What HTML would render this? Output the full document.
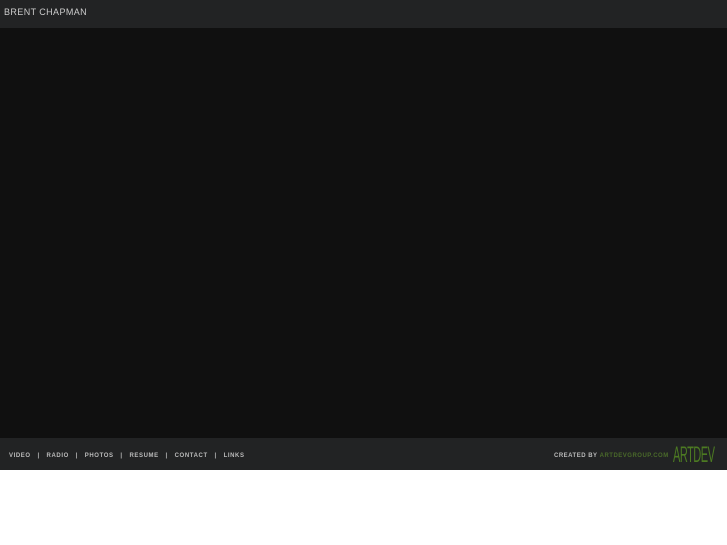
<!DOCTYPE html><html><head><style>
body{margin:0;width:727px;height:545px;background:#fff;font-family:"Liberation Sans",sans-serif;position:relative;overflow:hidden}
#h{position:absolute;left:0;top:0;width:727px;height:28px;background:#222324}
#h span{position:absolute;left:4px;top:7px;color:#ccc;font-size:9px;letter-spacing:0.4px}
#m{position:absolute;left:0;top:28px;width:727px;height:410px;background:#101010}
#f{position:absolute;left:0;top:438px;width:727px;height:32px;background:#222324}
#n{position:absolute;left:9px;top:15px;color:#bbb;font-size:6px;letter-spacing:0.6px;font-weight:bold;white-space:pre}
#c{position:absolute;left:554px;top:15px;color:#bbb;font-size:6px;letter-spacing:0.5px;font-weight:bold}
#c b{color:#4a6a2a}
#l{position:absolute;left:673px;top:4px;color:#4c7a22;font-size:22px;transform:scaleX(0.5);transform-origin:left;letter-spacing:-1px}
</style></head><body>
<div id="h"><span>BRENT CHAPMAN</span></div>
<div id="m"></div>
<div id="f"><div id="n">VIDEO   |   RADIO   |   PHOTOS   |   RESUME   |   CONTACT   |   LINKS</div>
<div id="c">CREATED BY <b>ARTDEVGROUP.COM</b></div><div id="l">ARTDEV</div></div>
</body></html>
